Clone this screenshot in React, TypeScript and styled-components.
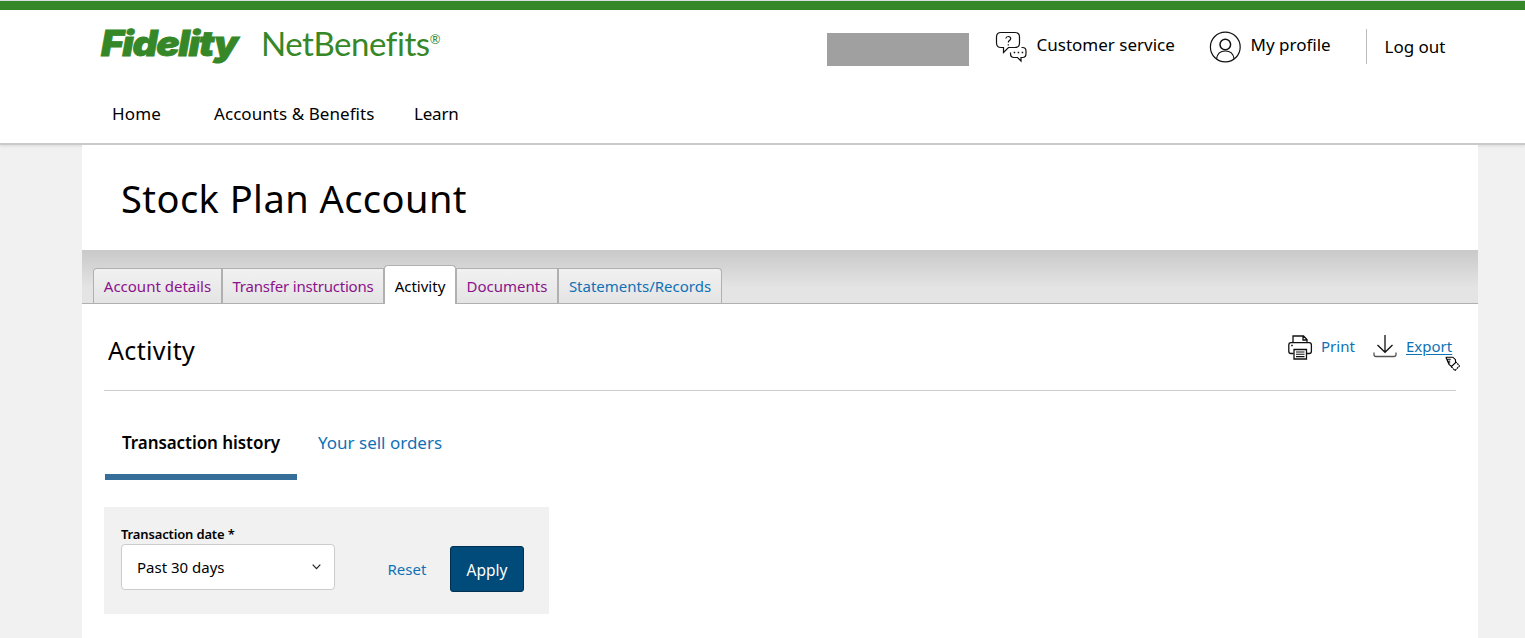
import React from "react";
import styled, { createGlobalStyle } from "styled-components";

const Global = createGlobalStyle`
  * { box-sizing: border-box; }
  html, body { margin: 0; padding: 0; background: #f1f1f1; }
  body { font-family: "Noto Sans", "Open Sans", sans-serif; color: #000; overflow: hidden; }
`;

const Page = styled.div`
  height: 638px;
  display: flex;
  flex-direction: column;
  overflow: hidden;
`;

const Header = styled.header`
  height: 145px;
  flex: none;
  background: #fff;
  border-bottom: 2px solid #cacaca;
  box-shadow: 0 1px 3px rgba(0, 0, 0, 0.1);
`;

const BrandStripe = styled.div`
  height: 10px;
  background: #368727;
  border-top: 1px solid #dadfe0;
`;

const TopRow = styled.div`
  height: 70px;
  display: flex;
  align-items: flex-start;
  padding-left: 101px;
`;

const Fidelity = styled.span`
  width: 160px;
  margin-top: 11px;
  font: italic 900 35px/44px Inter, "Noto Sans", sans-serif;
  letter-spacing: -1.2px;
  color: #368727;
  -webkit-text-stroke: 0.8px #368727;
  transform: scaleX(1.11);
  transform-origin: 0 50%;
  white-space: nowrap;
`;

const NetBenefits = styled.span`
  width: 566px;
  margin-top: 11px;
  font: 400 33px/44px Lato, sans-serif;
  letter-spacing: -0.45px;
  font-variant-ligatures: none;
  color: #368727;
  white-space: nowrap;
`;

const Registered = styled.sup`
  font-size: 13px;
  line-height: 0;
  vertical-align: 12px;
`;

const Redacted = styled.div`
  width: 142px;
  height: 33px;
  margin: 23px 26px 0 0;
  background: #a0a0a0;
`;

const Utility = styled.a<{ $w: number; $top: number }>`
  display: flex;
  width: ${(p) => p.$w}px;
  margin-top: ${(p) => p.$top}px;
  font-size: 17px;
  line-height: 28px;
  white-space: nowrap;
`;

const UtilityIcon = styled.svg<{ $gap: number }>`
  width: 32px;
  height: 32px;
  flex: none;
  margin-right: ${(p) => p.$gap}px;
`;

const LogOut = styled(Utility)`
  height: 35px;
  padding: 4px 0 0 17.5px;
  border-left: 1px solid #bcbcbc;
`;

const Nav = styled.nav`
  display: flex;
  padding: 21px 0 0 112px;
`;

const NavItem = styled.a<{ $w: number; $track?: number }>`
  width: ${(p) => p.$w}px;
  font-size: 17px;
  line-height: 25px;
  letter-spacing: ${(p) => p.$track ?? 0}px;
  white-space: nowrap;
`;

const Main = styled.main`
  width: 1396px;
  flex: 1;
  margin-left: 82px;
  background: #fff;
`;

const Title = styled.h1`
  height: 105px;
  margin: 0;
  padding: 28px 0 0 39px;
  font-size: 38px;
  line-height: 50px;
  font-weight: 400;
  letter-spacing: 0.45px;
`;

const TabBar = styled.div`
  height: 54px;
  display: flex;
  align-items: flex-end;
  padding-left: 11px;
  border-bottom: 1px solid #b0b0b0;
  background: linear-gradient(#c9c9c9, #e4e4e4 38px);
`;

const Tab = styled.a<{ $w: number; $tone: string; $active?: boolean; $track?: number }>`
  width: ${(p) => p.$w}px;
  height: ${(p) => (p.$active ? 39 : 35)}px;
  margin-bottom: ${(p) => (p.$active ? -1 : 0)}px;
  padding-top: ${(p) => (p.$active ? 8 : 5)}px;
  border: 1px solid #b0b0b0;
  border-bottom: 0;
  border-radius: ${(p) => (p.$active ? "4px 4px 0 0" : "0")};
  background: ${(p) => (p.$active ? "#fff" : "linear-gradient(#f1f1f1, #e4e4e4)")};
  color: ${(p) => p.$tone};
  font-size: 15px;
  line-height: 24px;
  letter-spacing: ${(p) => p.$track ?? 0}px;
  text-align: center;
  white-space: nowrap;
  &:first-child { border-top-left-radius: 4px; }
  &:last-child { border-top-right-radius: 4px; }
`;

const SectionHead = styled.div`
  height: 87px;
  margin: 0 22px;
  display: flex;
  justify-content: space-between;
  border-bottom: 1px solid #ccc;
`;

const SectionTitle = styled.h2`
  margin: 28px 0 0 4px;
  font-size: 25px;
  line-height: 36px;
  font-weight: 400;
  letter-spacing: 0.35px;
`;

const Actions = styled.div`
  display: flex;
  padding-top: 28px;
  position: relative;
`;

const Action = styled.a<{ $w: number; $underline?: boolean }>`
  display: flex;
  width: ${(p) => p.$w}px;
  color: #0f71b5;
  font-size: 15px;
  line-height: 28px;
  white-space: nowrap;
  text-decoration: ${(p) => (p.$underline ? "underline" : "none")};
  text-underline-offset: 2px;
`;

const ActionIcon = styled.svg`
  width: 26px;
  height: 28px;
  flex: none;
  margin: 0.5px 8.5px 0 -0.5px;
`;

const Pointer = styled.svg`
  position: absolute;
  right: -4px;
  top: 52px;
  width: 15px;
  height: 15px;
`;

const SubTabs = styled.div`
  display: flex;
  height: 89px;
  padding: 37px 0 0 23px;
`;

const SubTab = styled.a<{ $active?: boolean }>`
  width: ${(p) => (p.$active ? 192 : 160)}px;
  height: 52px;
  padding-left: ${(p) => (p.$active ? 17 : 21)}px;
  border-bottom: ${(p) => (p.$active ? "6px solid #356f99" : "0")};
  color: ${(p) => (p.$active ? "#000" : "#0f71b5")};
  font-size: 17px;
  line-height: 29px;
  font-weight: ${(p) => (p.$active ? 600 : 400)};
  letter-spacing: ${(p) => (p.$active ? -0.06 : 0)}px;
  white-space: nowrap;
`;

const Filter = styled.div`
  display: flex;
  width: 445px;
  height: 107px;
  margin: 27px 0 0 22px;
  padding: 17px;
  background: #f1f1f1;
`;

const Field = styled.label`
  width: 214px;
  font-size: 13px;
  line-height: 20px;
  font-weight: 600;
  letter-spacing: -0.15px;
  white-space: nowrap;
`;

const Select = styled.div`
  display: flex;
  justify-content: space-between;
  height: 46px;
  padding: 0 13px 0 15px;
  border: 1px solid #ccc;
  border-radius: 4px;
  background: #fff;
  font-size: 15px;
  font-weight: 400;
  letter-spacing: 0;
  line-height: 44px;
`;

const Chevron = styled.svg`
  width: 9px;
  height: 6px;
  margin-top: 19px;
`;

const Reset = styled.a`
  width: 115px;
  padding: 32px 0 0 52.5px;
  color: #0f71b5;
  font-size: 15px;
  line-height: 26px;
`;

const Apply = styled.button`
  width: 74px;
  height: 46px;
  margin-top: 22px;
  padding: 1px 0 0;
  border: 1px solid #00304f;
  border-radius: 3px;
  background: #004b7a;
  color: #fff;
  font: 400 15.5px "Noto Sans", sans-serif;
`;

export default function App() {
  return (
    <Page>
      <Global />
      <Header>
        <BrandStripe />
        <TopRow>
          <Fidelity>Fidelity</Fidelity>
          <NetBenefits>
            NetBenefits<Registered>®</Registered>
          </NetBenefits>
          <Redacted />
          <Utility $w={214} $top={21}>
            <UtilityIcon $gap={9.5} viewBox="0 0 32 32" fill="none" stroke="#111" strokeWidth="1.2">
              <path d="M6 1.500h14q4.500 0 4.500 4.500v6q0 4.500-4.500 4.500h-6.500l-5 5v-5H6q-4.500 0-4.500-4.500V6Q1.500 1.500 6 1.500Z" />
              <path d="M10.800 7.500q.3-2 2.500-2 2.400 0 2.400 2.100 0 1.200-1.300 2-1.100.8-1.100 1.900M13.300 13.300v1.200" />
              <path d="M26.500 16.500h1q3.500 0 3.500 3.500v2.500q0 4-3.500 4h-1.500v3.500l-3.500-3.500H19q-3.500 0-3.500-4v-1" />
              <path d="M18.700 21.500h1.500M22.700 21.500h1.500M26.700 21.500h1.500" strokeWidth="1.500" />
            </UtilityIcon>
            Customer service
          </Utility>
          <Utility $w={157} $top={21}>
            <UtilityIcon $gap={9.5} viewBox="0 0 32 32" fill="none" stroke="#111" strokeWidth="1.2">
              <circle cx="16.300" cy="16" r="14.900" />
              <circle cx="16.300" cy="13.500" r="5.300" strokeWidth="1.500" />
              <path d="M7.500 27.900C8.300 22.300 11.500 20 16.300 20s8 2.300 8.800 7.900" />
            </UtilityIcon>
            My profile
          </Utility>
          <LogOut $w={90} $top={19}>Log out</LogOut>
        </TopRow>
        <Nav>
          <NavItem $w={102} $track={0.15}>Home</NavItem>
          <NavItem $w={200} $track={0.06}>Accounts &amp; Benefits</NavItem>
          <NavItem $w={60} $track={-0.2}>Learn</NavItem>
        </Nav>
      </Header>
      <Main>
        <Title>Stock Plan Account</Title>
        <TabBar>
          <Tab $w={129} $tone="#8b128b">Account details</Tab>
          <Tab $w={162} $tone="#8b128b" $track={-0.2}>Transfer instructions</Tab>
          <Tab $w={72} $tone="#000" $active>Activity</Tab>
          <Tab $w={102} $tone="#8b128b">Documents</Tab>
          <Tab $w={164} $tone="#0f71b5">Statements/Records</Tab>
        </TabBar>
        <SectionHead>
          <SectionTitle>Activity</SectionTitle>
          <Actions>
            <Action $w={85}>
              <ActionIcon viewBox="0 0 26 28" fill="none" stroke="#111" strokeWidth="1.300">
                <path d="M6 9V3h10.500l3.500 3.500V9M16 3v4h4" />
                <path d="M6.500 20.500H4q-2.200 0-2.200-2.300V12q0-2.300 2.200-2.300h18.200q2.200 0 2.200 2.300v6.200q0 2.300-2.200 2.300h-2.700" />
                <path d="M7 16.500h12.500v9.500H7Z" />
                <path d="M9 19h8.500M9 21.300h8.500M9 23.600h8.500" strokeWidth="1.100" />
                <path d="M4.200 12.500h1.600" strokeWidth="1.600" />
              </ActionIcon>
              Print
            </Action>
            <Action $w={84} $underline>
              <ActionIcon viewBox="0 0 26 28" fill="none" stroke="#111" strokeWidth="1.300">
                <path d="M13 2v17M5.500 12l7.500 7.300L20.500 12" />
                <path d="M2 19.500v2q0 2 2 2h18q2 0 2-2v-2" stroke="#555" />
              </ActionIcon>
              Export
            </Action>
            <Pointer viewBox="0 0 15 15" fill="#fff" stroke="#000" strokeWidth="1.100">
              <path d="M10.500 5.500l4 4.500-4.500 4.500-4-4Z" strokeDasharray="2 .6" />
              <path d="M.8 1.200h7l2.700 2.500v3L6.500 10.500 4 8.500l-.6-1.400 1.800-.3M3.400 7L2.700 5.500l2.500-.5M2.700 5.500 1.800 3.200h4M.8 1.200l1 2" />
            </Pointer>
          </Actions>
        </SectionHead>
        <SubTabs>
          <SubTab $active>Transaction history</SubTab>
          <SubTab>Your sell orders</SubTab>
        </SubTabs>
        <Filter>
          <Field>
            Transaction date *
            <Select>
              Past 30 days
              <Chevron viewBox="0 0 9 6" fill="none" stroke="#222" strokeWidth="1.200">
                <path d="M.7.700l3.800 4L8.300.700" />
              </Chevron>
            </Select>
          </Field>
          <Reset>Reset</Reset>
          <Apply>Apply</Apply>
        </Filter>
      </Main>
    </Page>
  );
}
